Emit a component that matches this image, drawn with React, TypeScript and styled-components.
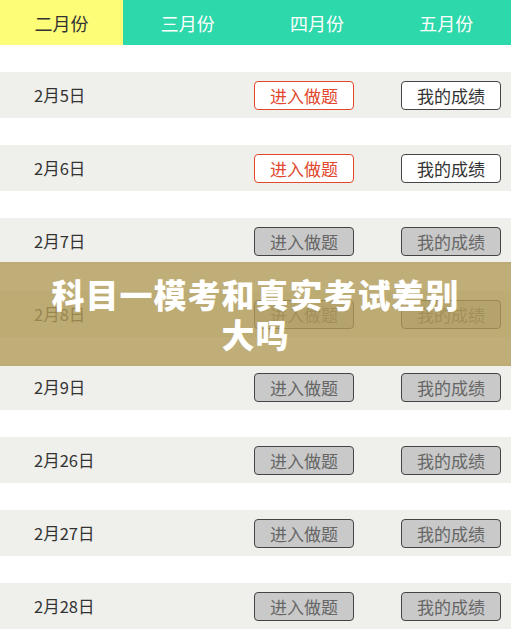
import React from "react";
import styled, { createGlobalStyle } from "styled-components";

const Global = createGlobalStyle`
  html, body { margin: 0; padding: 0; background: #fff; }
  body { font-family: "Noto Sans CJK SC", "Noto Sans", sans-serif; }
`;

const Page = styled.div`
  position: relative;
  width: 511px;
  height: 629px;
  overflow: hidden;
  background: #fff;
`;

const Tabs = styled.div`
  display: flex;
  height: 45px;
  background: #2dd8aa;
`;

const Tab = styled.div<{ $active?: boolean }>`
  flex: ${(p) => (p.$active ? "0 0 123px" : "1 1 0")};
  display: flex;
  align-items: center;
  justify-content: center;
  background: ${(p) => (p.$active ? "#fdfd78" : "transparent")};
  color: ${(p) => (p.$active ? "#333" : "#fff")};
  font-size: 18px;
`;

const List = styled.div`
  display: flex;
  flex-direction: column;
  gap: 27px;
  padding-top: 27px;
`;

const Row = styled.div`
  height: 46px;
  background: #efefeb;
  display: flex;
  align-items: center;
  padding: 0 10px 0 34px;
`;

const DateText = styled.div`
  flex: 1;
  font-size: 16.5px;
  color: #333;
`;

const Btn = styled.div<{ $variant: "red" | "white" | "gray" }>`
  box-sizing: border-box;
  width: 100px;
  height: 29px;
  margin-left: 47px;
  border-radius: 4px;
  display: flex;
  align-items: center;
  justify-content: center;
  font-size: 17px;
  border: 1px solid
    ${(p) => (p.$variant === "red" ? "#e2482e" : "#444")};
  color: ${(p) =>
    p.$variant === "red" ? "#e2482e" : p.$variant === "white" ? "#333" : "#666"};
  background: ${(p) => (p.$variant === "gray" ? "#c9c9c9" : "#fff")};
`;

const Overlay = styled.div`
  position: absolute;
  left: 0;
  right: 0;
  top: 262px;
  height: 104px;
  background: rgba(176, 154, 86, 0.8);
  display: flex;
  align-items: center;
  justify-content: center;
  text-align: center;
  color: #fff;
  font-size: 33px;
  font-weight: 900;
  line-height: 40px;
  letter-spacing: 1px;
  padding: 0 30px;
`;

const rows: { date: string; active: boolean }[] = [
  { date: "2月5日", active: true },
  { date: "2月6日", active: true },
  { date: "2月7日", active: false },
  { date: "2月8日", active: false },
  { date: "2月9日", active: false },
  { date: "2月26日", active: false },
  { date: "2月27日", active: false },
  { date: "2月28日", active: false },
];

export default function App() {
  return (
    <Page>
      <Global />
      <Tabs>
        <Tab $active>二月份</Tab>
        <Tab>三月份</Tab>
        <Tab>四月份</Tab>
        <Tab>五月份</Tab>
      </Tabs>
      <List>
        {rows.map((r) => (
          <Row key={r.date}>
            <DateText>{r.date}</DateText>
            <Btn $variant={r.active ? "red" : "gray"}>进入做题</Btn>
            <Btn $variant={r.active ? "white" : "gray"}>我的成绩</Btn>
          </Row>
        ))}
      </List>
      <Overlay>
        科目一模考和真实考试差别
        <br />
        大吗
      </Overlay>
    </Page>
  );
}
